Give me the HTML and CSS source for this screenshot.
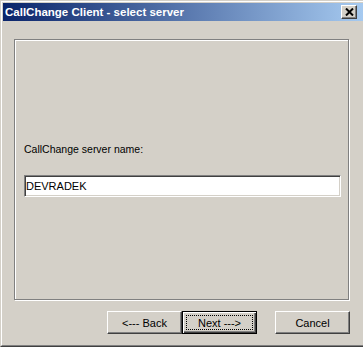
FILE: index.html
```html
<html>

<head>
  <meta charset="UTF-8">
  <title>CallChange Client - select server</title>
  <link rel="stylesheet" href="styles.css">
</head>

<body>
  <div class="window">
    <div class="frame">
      <div class="titlebar">
        <span class="title">CallChange Client - select server</span>
        <button class="close" aria-label="Close">
          <svg width="9" height="8" viewBox="0 0 9 8">
            <path d="M1 0.5 L8 7.5 M8 0.5 L1 7.5" stroke="#000" stroke-width="2" fill="none"/>
          </svg>
        </button>
      </div>

      <div class="content">
        <div class="group">
          <label class="caption" for="server-name">CallChange server name:</label>
          <input class="field" type="text" id="server-name" value="DEVRADEK">
        </div>

        <div class="buttons">
          <button class="btn">&lt;--- Back</button>
          <button class="btn btn-default"><span class="focus">Next ---&gt;</span></button>
          <button class="btn btn-cancel">Cancel</button>
        </div>
      </div>
    </div>
  </div>
</body>

</html>
```

FILE: styles.css
```css
* {
  box-sizing: border-box;
}

html,
body {
  margin: 0;
  padding: 0;
}

body {
  background-color: #d4d0c8;
  font-family: "Liberation Sans", Arial, sans-serif;
  overflow: hidden;
}

.window {
  height: 347px;
  background-color: #d4d0c8;
  border-top: 1px solid #d4d0c8;
  border-left: 1px solid #d4d0c8;
  border-bottom: 1px solid #404040;
}

.frame {
  height: 100%;
  display: flex;
  flex-direction: column;
  padding: 1px 0 0 1px;
  border-top: 1px solid #fff;
  border-left: 1px solid #fff;
  border-bottom: 1px solid #808080;
}

.titlebar {
  height: 18px;
  display: flex;
  align-items: center;
  padding: 0 6px 0 2px;
  background: linear-gradient(to right, #0a246a, #a6caf0);
  color: #fff;
  font-size: 11.5px;
  font-weight: bold;
}

.close {
  margin-left: auto;
  width: 16px;
  height: 14px;
  padding: 0;
  display: flex;
  align-items: center;
  justify-content: center;
  background-color: #d4d0c8;
  border: 1px solid;
  border-color: #fff #404040 #404040 #fff;
  box-shadow: inset -1px -1px 0 #808080;
}

.content {
  flex: 1;
  padding: 18px 0 0 11px;
}

.group {
  width: 335px;
  height: 261px;
  display: flex;
  flex-direction: column;
  align-items: flex-start;
  padding: 103px 0 0 9px;
  border: 1px solid #808080;
  box-shadow: 1px 1px 0 #fff, inset 1px 1px 0 #fff;
}

.caption {
  font-size: 10.5px;
  line-height: 13px;
  color: #000;
}

.field {
  width: 317px;
  height: 22px;
  margin: 19px 0 0 0;
  padding: 0 0 0 1px;
  font-family: "Liberation Sans", Arial, sans-serif;
  font-size: 11px;
  color: #000;
  background-color: #fff;
  border: 1px solid;
  border-color: #808080 #fff #fff #808080;
  box-shadow: inset 1px 1px 0 #404040, inset -1px -1px 0 #d4d0c8;
  outline: none;
}

.buttons {
  width: 336px;
  display: flex;
  justify-content: flex-end;
  margin-top: 11px;
}

.btn {
  width: 75px;
  height: 23px;
  padding: 0;
  font-family: "Liberation Sans", Arial, sans-serif;
  font-size: 11px;
  color: #000;
  background-color: #d4d0c8;
  border: 1px solid;
  border-color: #fff #404040 #404040 #fff;
  box-shadow: inset -1px -1px 0 #808080;
}

.btn-default {
  padding: 3px;
  border-color: #000;
  box-shadow: inset 1px 1px 0 #fff, inset -1px -1px 0 #404040, inset -2px -2px 0 #808080;
}

.focus {
  display: flex;
  align-items: center;
  justify-content: center;
  height: 100%;
  border: 1px dotted #000;
}

.btn-cancel {
  margin-left: 18px;
}
```
